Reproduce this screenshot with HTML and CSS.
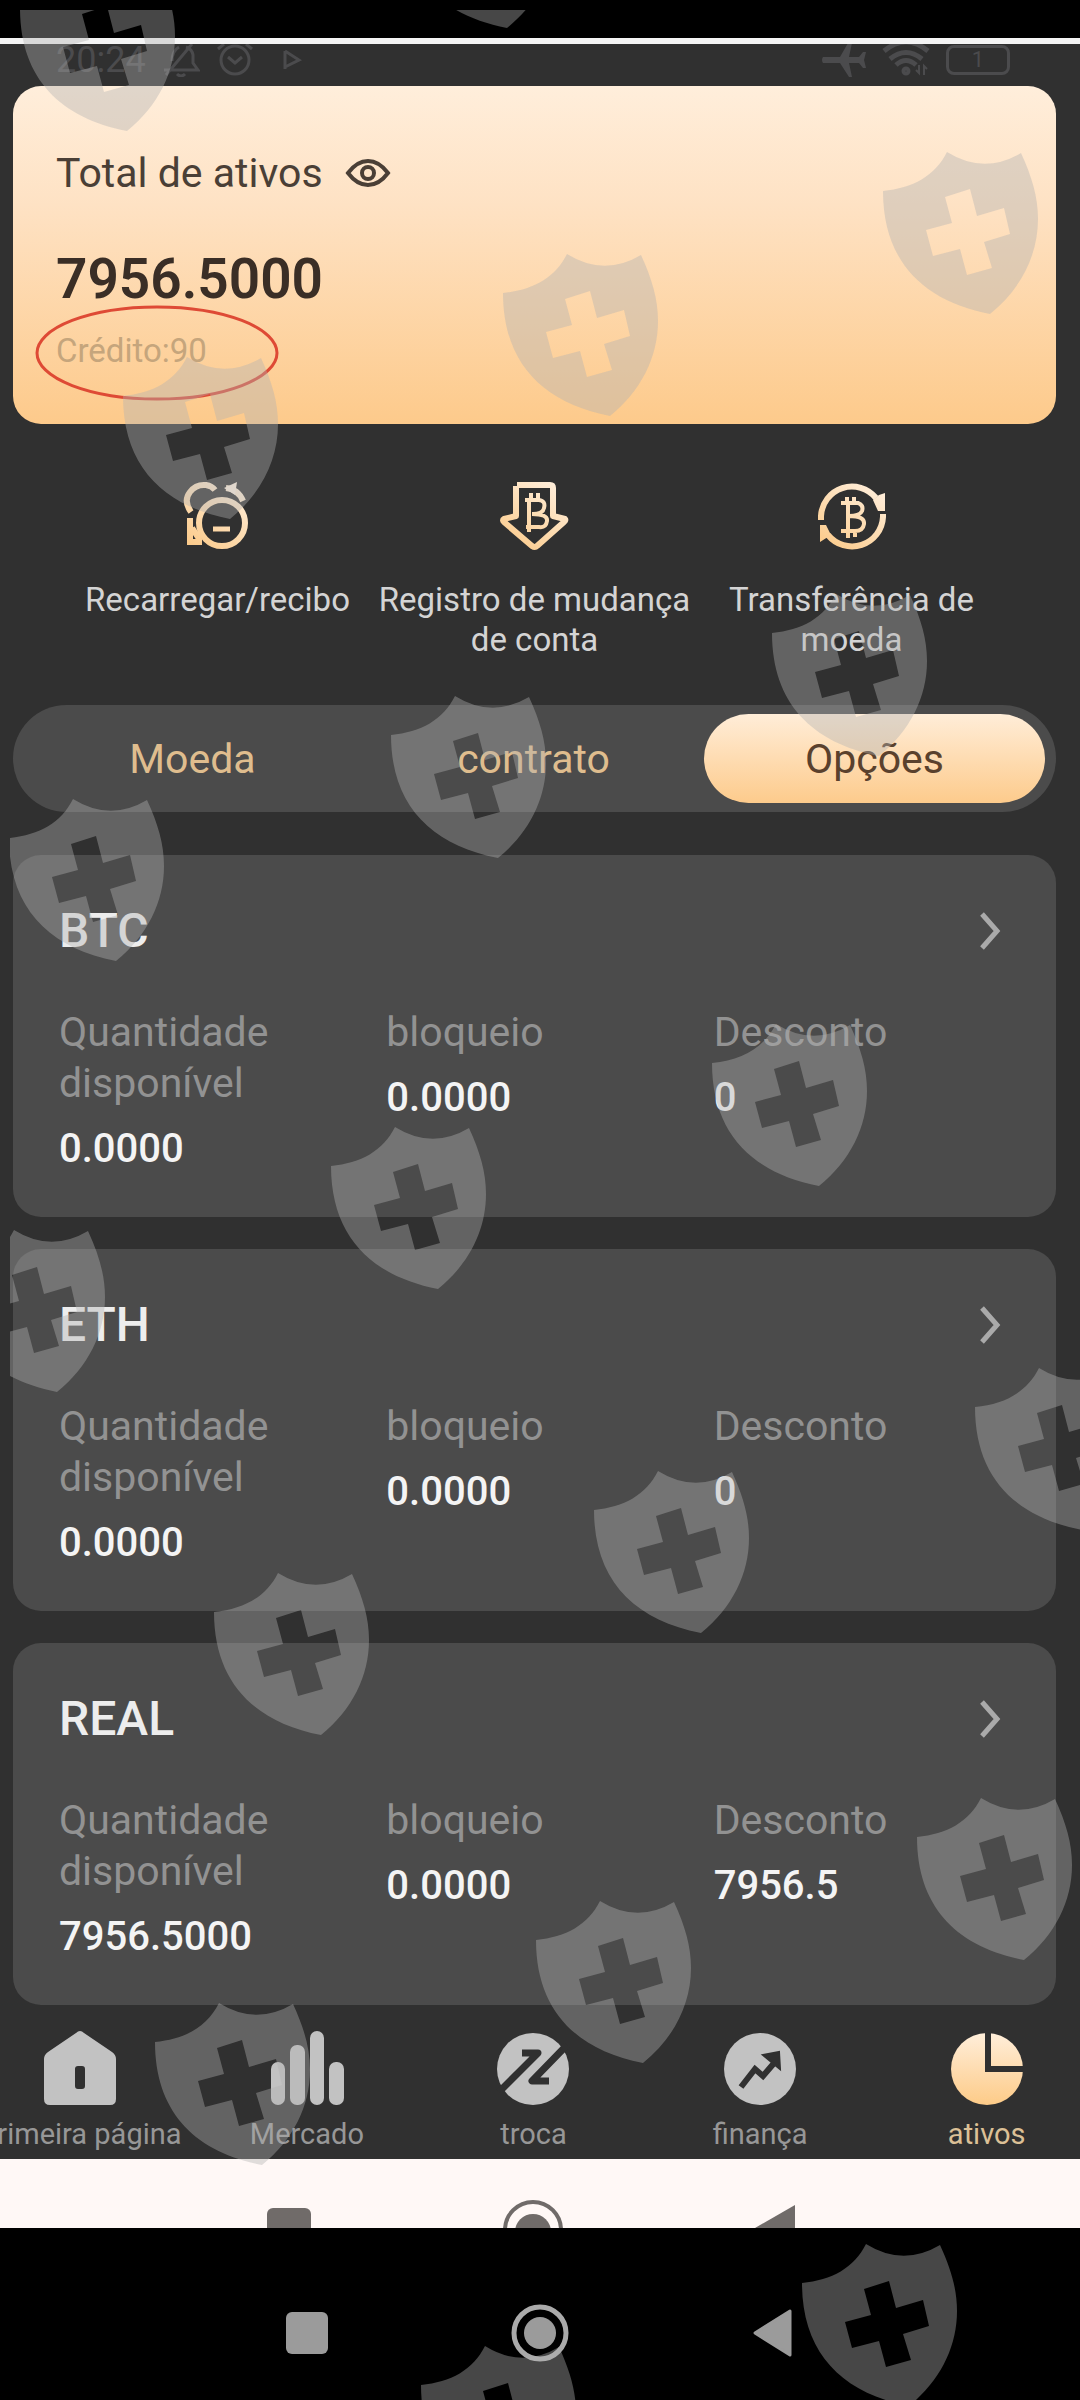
FILE: index.html
```html
<!DOCTYPE html>
<html lang="pt">
<head>
<meta charset="utf-8">
<meta name="viewport" content="width=device-width, initial-scale=1">
<title>Ativos</title>
<link rel="stylesheet" href="styles.css">
</head>
<body>
<div class="screen">
  <div class="app">
    <header class="status">
      <div class="status-group">
        <span class="clock">20:24</span>
        <svg width="38" height="34" viewBox="0 0 38 34" fill="none" stroke="currentColor" stroke-width="3"><path d="M2 27H36L31 20V12Q30 6 24 4M4 32L30 1M15 31Q19 35 23 31M10 18Q10 8 17 4"/></svg>
        <svg class="alarm" width="38" height="34" viewBox="0 0 38 34" fill="none" stroke="currentColor" stroke-width="3"><circle cx="19" cy="17" r="14"/><path d="M12 14l7 6 7-6M2 6l6-5M30 1l6 5"/></svg>
        <svg width="20" height="22" viewBox="0 0 20 22" fill="none" stroke="currentColor" stroke-width="3"><path d="M3 2V20M3 2L17 11L3 18"/></svg>
      </div>
      <div class="status-group status-right">
        <svg width="44" height="34" viewBox="0 0 44 34" fill="currentColor"><path d="M1 14H18L26 0H30L27 14H37L41 9H44L42 17L44 25H41L37 20H27L30 34H27L18 20H1Q-1 17 1 14Z"/></svg>
        <svg width="48" height="34" viewBox="0 0 48 34" fill="none" stroke="currentColor" stroke-width="5"><path d="M2 8Q24 -10 46 8M8 16Q24 3 40 16M14 22Q24 13 34 22"/><circle cx="24" cy="28" r="2"/><path d="M37 22v8l-3-3M42 32v-9l3 3" stroke-width="2"/></svg>
        <span class="battery">1</span>
      </div>
    </header>

    <main class="content">
      <section class="total">
        <div class="total-head">
          <h1 class="total-title">Total de ativos</h1>
          <button class="eye" type="button" aria-label="Mostrar saldo">
            <svg width="46" height="30" viewBox="0 0 46 30" fill="none" stroke="currentColor"><path d="M3 15Q12 3 23 3T43 15Q34 27 23 27T3 15Z" stroke-width="4"/><circle cx="23" cy="15" r="6" stroke-width="4"/></svg>
          </button>
        </div>
        <p class="total-value">7956.5000</p>
        <p class="credit">Crédito:90
          <svg class="ring" viewBox="0 0 244 96" fill="none"><ellipse cx="122" cy="48" rx="120" ry="46" stroke="#de4a35" stroke-width="3"/></svg>
        </p>
      </section>

      <nav class="actions">
        <a class="action" href="#recarregar">
          <svg width="72" height="72" viewBox="0 0 72 72" fill="none" stroke="url(#gold)" stroke-width="6"><defs><linearGradient id="gold" gradientUnits="userSpaceOnUse" x1="60" y1="0" x2="10" y2="72"><stop offset="0" stop-color="#fff0df"/><stop offset="1" stop-color="#fbc987"/></linearGradient></defs><circle cx="40" cy="43" r="23"/><path d="M9 32Q1 21 8 12Q14 4 24 5Q30 6 33 10M44 8Q56 9 61 21M8 38V62H20M10 48L18 60"/><path d="M42 8L55 2L53 15Z" fill="#fff0df" stroke="none"/><path d="M31 49H48" stroke-width="5"/></svg>
          <span>Recarregar/recibo</span>
        </a>
        <a class="action" href="#registro">
          <svg width="72" height="72" viewBox="0 0 72 72" fill="none" stroke="url(#gold)"><path d="M18 5H51Q54 5 54 8V36L66 39Q67 40 65 42L38 66Q36 68 33 66L5 42Q3 40 5 39L17 36V6" stroke-width="6" stroke-linejoin="round"/><path d="M26 20H40Q47 21 45 28Q44 34 34 34M30 20V52M33 34Q49 34 48 41Q47 48 40 47H27M32 13V20M39 13V20" stroke-width="4"/></svg>
          <span>Registro de mudança de conta</span>
        </a>
        <a class="action" href="#transferencia">
          <svg width="72" height="72" viewBox="0 0 72 72" fill="none" stroke="url(#gold)"><path d="M5 40V36A31 31 0 0 1 60 18M67 34V37A31 31 0 0 1 12 55" stroke-width="6"/><path d="M69 13V31H62L57 20L63 15ZM4 62V45H10L15 55Z" fill="url(#gold)" stroke="none"/><path d="M25 23H42Q48 25 46 31Q44 36 33 36M32 23V58M33 36Q49 36 48 44Q47 51 39 51H25M31 17V24M38 17V24M39 51V57" stroke-width="4"/></svg>
          <span>Transferência de moeda</span>
        </a>
      </nav>

      <div class="tabs" role="tablist">
        <button class="tab" type="button" role="tab">Moeda</button>
        <button class="tab" type="button" role="tab">contrato</button>
        <button class="tab tab-active" type="button" role="tab" aria-selected="true">Opções</button>
      </div>

      <div class="coins">
        <article class="coin">
          <a class="coin-head" href="#btc"><h2>BTC</h2><svg class="chevron" width="22" height="40" viewBox="0 0 22 40"><path d="M3 3L18 20L3 37"/></svg></a>
          <dl class="figures">
            <div><dt>Quantidade disponível</dt><dd>0.0000</dd></div>
            <div><dt>bloqueio</dt><dd>0.0000</dd></div>
            <div><dt>Desconto</dt><dd>0</dd></div>
          </dl>
        </article>
        <article class="coin">
          <a class="coin-head" href="#eth"><h2>ETH</h2><svg class="chevron" width="22" height="40" viewBox="0 0 22 40"><path d="M3 3L18 20L3 37"/></svg></a>
          <dl class="figures">
            <div><dt>Quantidade disponível</dt><dd>0.0000</dd></div>
            <div><dt>bloqueio</dt><dd>0.0000</dd></div>
            <div><dt>Desconto</dt><dd>0</dd></div>
          </dl>
        </article>
        <article class="coin">
          <a class="coin-head" href="#real"><h2>REAL</h2><svg class="chevron" width="22" height="40" viewBox="0 0 22 40"><path d="M3 3L18 20L3 37"/></svg></a>
          <dl class="figures">
            <div><dt>Quantidade disponível</dt><dd>7956.5000</dd></div>
            <div><dt>bloqueio</dt><dd>0.0000</dd></div>
            <div><dt>Desconto</dt><dd>7956.5</dd></div>
          </dl>
        </article>
      </div>
    </main>

    <nav class="bottom-nav">
      <a href="#home"><svg width="74" height="74" viewBox="0 0 74 74" fill="currentColor"><path fill-rule="evenodd" d="M37 0Q39 0 41 2L69 21Q73 24 73 28V68Q73 74 67 74H7Q1 74 1 68V28Q1 24 5 21L33 2Q35 0 37 0ZM32 38V55Q32 58 35 58H39Q42 58 42 55V38Q42 35 39 35H35Q32 35 32 38Z"/></svg><span>Primeira página</span></a>
      <a href="#mercado"><svg width="74" height="74" viewBox="0 0 74 74" fill="currentColor"><rect x="1" y="31" width="14" height="43" rx="7"/><rect x="20" y="14" width="15" height="60" rx="7"/><rect x="40" y="0" width="14" height="74" rx="7"/><rect x="59" y="31" width="15" height="43" rx="7"/></svg><span>Mercado</span></a>
      <a href="#troca"><svg width="74" height="74" viewBox="0 0 74 74"><circle cx="37" cy="38" r="36" fill="currentColor"/><path d="M26 22H42L3 61M71 14L36 50H53" fill="none" stroke="#303030" stroke-width="7" stroke-linejoin="round"/></svg><span>troca</span></a>
      <a href="#financa"><svg width="74" height="74" viewBox="0 0 74 74"><circle cx="37" cy="38" r="36" fill="currentColor"/><path d="M18 56L32 38L40 45L52 31" fill="none" stroke="#303030" stroke-width="6"/><path d="M40 24L56 21L57 38Z" fill="#303030" stroke="#303030" stroke-width="2"/></svg><span>finança</span></a>
      <a class="current" href="#ativos"><svg width="74" height="74" viewBox="0 0 74 74"><defs><linearGradient id="pie" x1="0" y1="0" x2="0" y2="1"><stop offset="0" stop-color="#ffeeda"/><stop offset="1" stop-color="#fdcb88"/></linearGradient></defs><circle cx="37" cy="38" r="36" fill="url(#pie)"/><path d="M38 0V38H74" fill="none" stroke="#303030" stroke-width="6"/></svg><span>ativos</span></a>
    </nav>
  </div>

  <div class="inner-nav" aria-hidden="true">
    <svg width="44" height="28" viewBox="0 0 44 28"><rect y="8" width="44" height="44" rx="6" fill="currentColor"/></svg>
    <svg width="60" height="28" viewBox="0 0 60 28"><circle cx="30" cy="30" r="28" fill="none" stroke="currentColor" stroke-width="4"/><circle cx="30" cy="32" r="18" fill="currentColor"/></svg>
    <svg width="40" height="28" viewBox="0 0 40 28"><path d="M40 5V28H0Z" fill="currentColor"/></svg>
  </div>

  <footer class="system-nav">
    <button type="button" aria-label="Recentes"><svg width="60" height="60" viewBox="0 0 60 60"><rect x="9" y="9" width="42" height="42" rx="6" fill="#9b9b9b"/></svg></button>
    <button type="button" aria-label="Início"><svg width="60" height="60" viewBox="0 0 60 60"><circle cx="30" cy="30" r="26" fill="none" stroke="#aaa" stroke-width="5"/><circle cx="30" cy="30" r="16" fill="#9b9b9b"/></svg></button>
    <button type="button" aria-label="Voltar"><svg width="60" height="60" viewBox="0 0 60 60"><path d="M12 30L47 8V52Z" fill="#9b9b9b" stroke="#9b9b9b" stroke-width="3" stroke-linejoin="round"/></svg></button>
  </footer>

  <svg class="watermark" viewBox="0 0 1080 2400" preserveAspectRatio="xMidYMin slice" aria-hidden="true">
    <defs>
      <clipPath id="inset"><rect x="10" y="10" width="1070" height="2390"/></clipPath>
      <path id="shield" fill-rule="evenodd" d="M0 40C30 37 52 25 64 1Q101 24 138 2C149 26 155 46 155 68C155 104 138 138 107 163C40 150 0 110 0 40ZM62 46L69 72L43 79L50 105L77 98L84 124L109 117L101 91L127 83L121 57L94 65L87 38Z"/>
    </defs>
    <g clip-path="url(#inset)" fill="#b2b2b2" fill-opacity="0.4">
      <use href="#shield" x="20" y="-32"/><use href="#shield" x="400" y="-135"/>
      <use href="#shield" x="883" y="151"/><use href="#shield" x="503" y="253"/><use href="#shield" x="123" y="356"/>
      <use href="#shield" x="772" y="593"/><use href="#shield" x="391" y="695"/><use href="#shield" x="9" y="798"/>
      <use href="#shield" x="712" y="1023"/><use href="#shield" x="331" y="1126"/><use href="#shield" x="-50" y="1229"/>
      <use href="#shield" x="975" y="1367"/><use href="#shield" x="594" y="1470"/><use href="#shield" x="214" y="1572"/>
      <use href="#shield" x="917" y="1797"/><use href="#shield" x="536" y="1900"/><use href="#shield" x="155" y="2002"/>
      <use href="#shield" x="802" y="2243"/><use href="#shield" x="421" y="2345"/>
    </g>
  </svg>
</div>
</body>
</html>
```
FILE: styles.css
```css
* { box-sizing: border-box; }

body, h1, h2, p, dl, dd { margin: 0; }

body {
  background: #000;
  color: #e8e8e8;
  font-family: Roboto, "Liberation Sans", sans-serif;
}

a { color: inherit; text-decoration: none; }

button {
  padding: 0;
  border: 0;
  background: none;
  color: inherit;
  font: inherit;
}

svg { display: block; }

.screen {
  position: relative;
  min-height: 100vh;
  padding-top: 38px;
  overflow: hidden;
}

.app {
  overflow: hidden;
  border-top: 6px solid #f4f4f4;
  background: #303030;
}

/* Status bar */
.status {
  display: flex;
  justify-content: space-between;
  height: 42px;
  padding: 0 70px 0 56px;
  color: #4b4b4d;
}

.status-group {
  display: flex;
  align-items: center;
  gap: 16px;
  height: 32px;
}

.alarm { margin-right: 12px; }

.clock { font-size: 36px; line-height: 32px; }

.battery {
  width: 64px;
  height: 30px;
  border: 3px solid currentColor;
  border-radius: 8px;
  font-size: 22px;
  line-height: 24px;
  text-align: center;
}

.content { padding: 0 24px 0 13px; }

/* Total balance */
.total {
  height: 338px;
  padding: 63px 43px 0;
  border-radius: 28px;
  background: linear-gradient(#ffeedb, #fee2c4 35%, #fdca8b);
  color: #4a3f36;
}

.total-head { display: flex; align-items: center; gap: 22px; }

.total-title { font-size: 41px; font-weight: 400; line-height: 48px; }

.total-value {
  margin-top: 50px;
  color: #3a2e26;
  font-size: 55px;
  font-weight: 600;
  line-height: 64px;
}

.credit {
  position: relative;
  width: max-content;
  margin-top: 20px;
  color: #c5a57c;
  font-size: 33px;
  line-height: 40px;
}

.ring {
  position: absolute;
  top: -26px;
  left: -21px;
  width: 244px;
  height: 96px;
}

/* Shortcuts */
.actions {
  display: grid;
  grid-template-columns: repeat(3, 1fr);
  padding: 56px 46px 0;
}

.action {
  display: flex;
  flex-direction: column;
  align-items: center;
  gap: 28px;
  color: #d4d4d4;
  font-size: 33px;
  line-height: 40px;
  text-align: center;
}

/* Tabs */
.tabs {
  display: grid;
  grid-template-columns: repeat(3, 1fr);
  margin-top: 45px;
  padding: 9px 11px 9px 9px;
  border-radius: 54px;
  background: #4b4b4b;
}

.tab {
  height: 89px;
  border-radius: 45px;
  color: #dfbd8e;
  font-size: 41px;
}

.tab-active {
  background: linear-gradient(#ffedd8, #fdcb8c);
  color: #5a412d;
}

/* Coins */
.coins {
  display: grid;
  gap: 32px;
  margin-top: 43px;
}

.coin {
  padding: 46px 15px 40px 46px;
  border-radius: 28px;
  background: #4b4b4b;
}

.coin-head {
  display: flex;
  align-items: center;
  justify-content: space-between;
  padding-right: 40px;
}

.coin-head h2 {
  color: #ededed;
  font-size: 48px;
  font-weight: 500;
  line-height: 60px;
}

.chevron { fill: none; stroke: #aaa; stroke-width: 5; }

.figures {
  display: grid;
  grid-template-columns: repeat(3, 1fr);
  margin-top: 46px;
}

.figures dt {
  color: #929292;
  font-size: 41px;
  line-height: 51px;
}

.figures dd {
  margin-top: 12px;
  color: #f4f4f4;
  font-size: 40px;
  font-weight: 500;
  line-height: 56px;
}

/* Tab bar, wider than the window on both sides */
.bottom-nav {
  display: grid;
  grid-template-columns: repeat(5, 1fr);
  margin: 0 -20px 0 -33px;
  padding: 26px 0 9px;
  color: #c2c2c2;
}

.bottom-nav a {
  display: flex;
  flex-direction: column;
  align-items: center;
  gap: 13px;
}

.bottom-nav span {
  color: #979797;
  font-size: 29px;
  line-height: 32px;
  white-space: nowrap;
}

.bottom-nav .current span { color: #dcc096; }

/* System buttons */
.inner-nav {
  display: flex;
  justify-content: space-between;
  align-items: flex-end;
  height: 69px;
  padding: 0 285px 0 267px;
  background: #fff8f6;
  color: #706b69;
}

.system-nav {
  display: flex;
  justify-content: center;
  gap: 173px;
  padding: 75px 0 35px;
}

.watermark {
  position: absolute;
  inset: 0;
  width: 100%;
  height: 100%;
  pointer-events: none;
}
```
